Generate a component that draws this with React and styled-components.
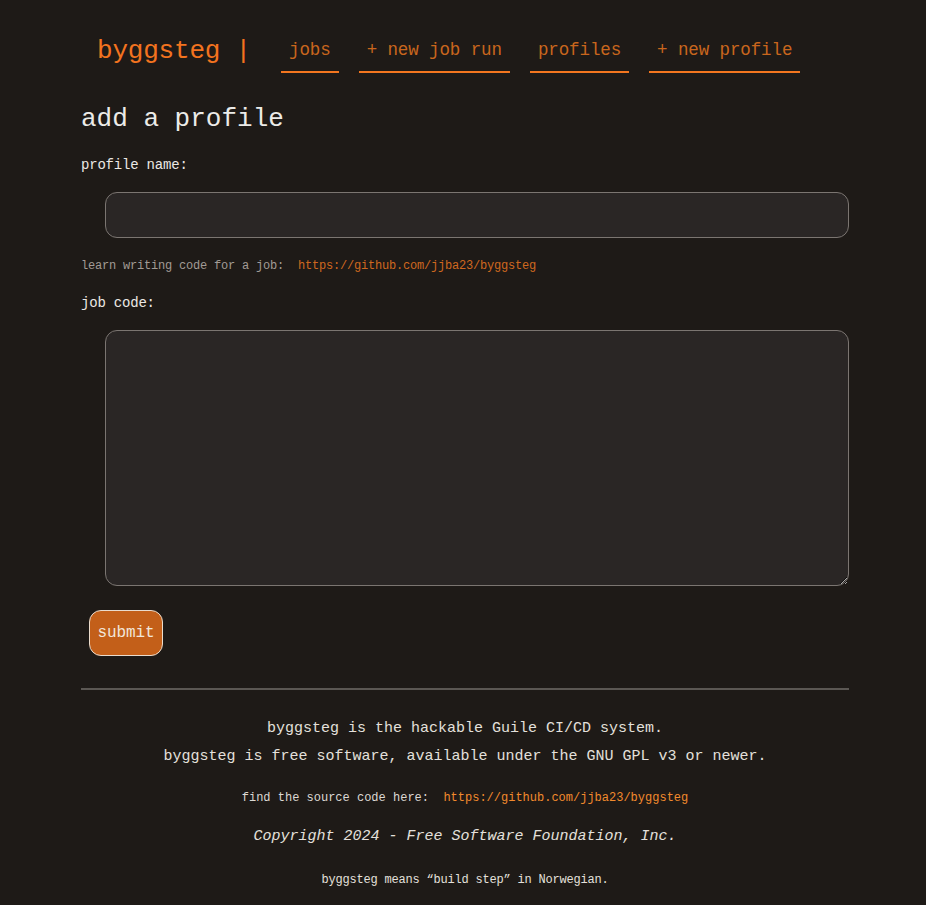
import React from "react";
import styled, { createGlobalStyle } from "styled-components";

const GlobalStyle = createGlobalStyle`
  html {
    color-scheme: dark;
    overflow-y: scroll;
  }
  html::-webkit-scrollbar {
    width: 10px;
    background: #2d2c2c;
  }
  html::-webkit-scrollbar-thumb {
    background: #545352;
    border-radius: 5px;
    border: 2px solid #2d2c2c;
  }
  body {
    margin: 0;
    background: #1e1a17;
    color: #e6e2de;
    font-family: "Liberation Mono", "DejaVu Sans Mono", monospace;
  }
`;

const Page = styled.div`
  width: 768px;
  margin-left: 81px;
  padding-bottom: 40px;
`;

const Header = styled.header`
  display: flex;
  align-items: center;
  padding-top: 29px;
  padding-left: 16px;
`;

const Brand = styled.span`
  color: #f3731f;
  font-size: 26px;
  letter-spacing: -0.2px;
  line-height: 44px;
  margin-right: 30px;
  white-space: pre;
`;

const Nav = styled.nav`
  display: flex;
  gap: 20px;
`;

const NavLink = styled.a`
  display: block;
  color: #c9661d;
  font-size: 17.5px;
  letter-spacing: -0.1px;
  line-height: 24px;
  padding: 9px 8px 9px;
  border-bottom: 2px solid #f3761f;
  text-decoration: none;
  white-space: pre;
`;

const Title = styled.h1`
  margin: 31px 0 21px;
  font-size: 26px;
  font-weight: normal;
  line-height: 30px;
  color: #ecebe8;
`;

const Form = styled.form`
  display: flex;
  flex-direction: column;
  align-items: flex-start;
`;

const Label = styled.label`
  font-size: 14px;
  letter-spacing: -0.2px;
  line-height: 20px;
  color: #ebe8e4;
  margin-bottom: 17px;
`;

const fieldStyles = `
  box-sizing: border-box;
  margin-left: 24px;
  width: 744px;
  background: #2a2625;
  border: 1px solid #7b7571;
  border-radius: 12px;
  color: #ebe8e4;
  font-family: "Liberation Mono", monospace;
  font-size: 15px;
  padding: 8px 12px;
  outline: none;
`;

const Input = styled.input`
  ${fieldStyles}
  height: 46px;
  margin-bottom: 20px;
`;

const TextArea = styled.textarea`
  ${fieldStyles}
  height: 256px;
  margin-bottom: 24px;
`;

const Hint = styled.p`
  margin: 0 0 ${props => props.$after || 0}px;
  font-size: 12px;
  letter-spacing: ${props => (props.$wide ? "0" : "-0.2px")};
  line-height: 16px;
  color: ${props => props.$color || "#a29b95"};
  white-space: pre;
`;

const HintLink = styled.a`
  color: ${props => props.$color};
  text-decoration: none;
`;

const Submit = styled.button`
  margin-left: 8px;
  width: 74px;
  height: 46px;
  background: #c35f19;
  border: 1px solid #eadccd;
  border-radius: 12px;
  color: #f2e6da;
  font-family: "Liberation Mono", monospace;
  font-size: 16px;
  letter-spacing: -0.1px;
  padding: 0;
`;

const Rule = styled.hr`
  margin: 32px 0 25px;
  border: none;
  height: 2px;
  background: #5b5753;
`;

const Footer = styled.footer`
  display: flex;
  flex-direction: column;
  align-items: center;
  text-align: center;
`;

const FooterLine = styled.p`
  margin: 0;
  font-size: 15px;
  line-height: 28px;
  color: #e4e0dc;
  font-style: ${props => (props.$italic ? "italic" : "normal")};
  margin-bottom: ${props => props.$after || 0}px;
  white-space: pre;
`;

const REPO = "https://github.com/jjba23/byggsteg";

export default function App() {
  return (
    <>
      <GlobalStyle />
      <Page>
        <Header>
          <Brand>byggsteg |</Brand>
          <Nav>
            <NavLink href="#">jobs</NavLink>
            <NavLink href="#">+ new job run</NavLink>
            <NavLink href="#">profiles</NavLink>
            <NavLink href="#">+ new profile</NavLink>
          </Nav>
        </Header>

        <Title>add a profile</Title>

        <Form onSubmit={e => e.preventDefault()}>
          <Label htmlFor="profile-name">profile name:</Label>
          <Input id="profile-name" type="text" />
          <Hint $after={19}>
            {"learn writing code for a job:  "}
            <HintLink $color="#cf681f" href="#">{REPO}</HintLink>
          </Hint>
          <Label htmlFor="job-code">job code:</Label>
          <TextArea id="job-code" />
          <Submit type="submit">submit</Submit>
        </Form>

        <Rule />

        <Footer>
          <FooterLine>byggsteg is the hackable Guile CI/CD system.</FooterLine>
          <FooterLine $after={19}>
            byggsteg is free software, available under the GNU GPL v3 or newer.
          </FooterLine>
          <Hint $wide $color="#dcd8d3" $after={17}>
            {"find the source code here:  "}
            <HintLink $color="#f28a2d" href="#">{REPO}</HintLink>
          </Hint>
          <FooterLine $italic $after={21}>
            Copyright 2024 - Free Software Foundation, Inc.
          </FooterLine>
          <Hint $color="#e4e0dc">byggsteg means “build step” in Norwegian.</Hint>
        </Footer>
      </Page>
    </>
  );
}
